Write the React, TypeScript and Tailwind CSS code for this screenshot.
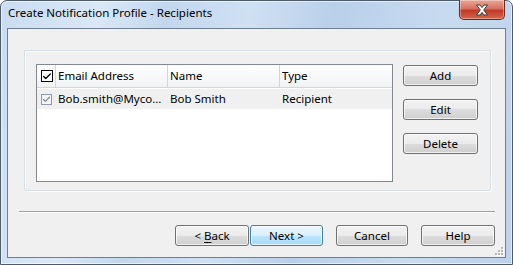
import { Check } from "lucide-react";

const font = { fontFamily: '"Noto Sans", "Open Sans", sans-serif' };

function WinButton({
  label,
  primary = false,
  className = "",
}: {
  label: React.ReactNode;
  primary?: boolean;
  className?: string;
}) {
  return (
    <div
      className={`flex h-[21px] shrink-0 items-center justify-center rounded-[3px] border text-[11.5px] leading-none text-black ${
        primary
          ? "border-[#3c7fb1] bg-[linear-gradient(#eaf6fd_0%,#d9f0fc_50%,#bee6fd_50%,#a7d9f5_100%)]"
          : "border-[#707070] bg-[linear-gradient(#f2f2f2_0%,#ebebeb_50%,#dddddd_50%,#cfcfcf_100%)]"
      } shadow-[inset_0_0_0_1px_rgba(255,255,255,0.7)] ${className}`}
    >
      {label}
    </div>
  );
}

function CloseButton() {
  return (
    <div className="flex h-[20px] w-[46px] items-center justify-center rounded-b-[5px] border border-t-0 border-[#6b2a20] bg-[linear-gradient(#eaa796_0%,#d8705f_45%,#c23a26_55%,#d4664a_100%)] shadow-[inset_0_0_0_1px_rgba(255,255,255,0.35)]">
      <svg width="14" height="12" viewBox="0 0 14 12">
        <path
          d="M1.5 1 L5 1 L7 3.6 L9 1 L12.5 1 L8.7 6 L12.5 11 L9 11 L7 8.4 L5 11 L1.5 11 L5.3 6 Z"
          fill="#ffffff"
          stroke="#3d3d3d"
          strokeWidth="1"
          strokeLinejoin="round"
        />
      </svg>
    </div>
  );
}

function HeaderCell({ children, className = "" }: { children?: React.ReactNode; className?: string }) {
  return (
    <div className={`flex h-full items-center border-r border-[#d5d5d5] pl-[2px] ${className}`}>
      {children}
    </div>
  );
}

export default function App() {
  return (
    <div style={font} className="h-[265px] w-[513px] overflow-hidden bg-white">
      <div className="flex h-[265px] w-[513px] flex-col rounded-t-[7px] border border-[#4e5b6b] bg-[linear-gradient(100deg,#c9dcf1_0%,#dae8f7_18%,#c2d7ee_30%,#cfe0f3_45%,#b9d0ea_60%,#c7dbf0_80%,#bcd2eb_100%)] px-[6px] shadow-[inset_0_0_0_1px_rgba(255,255,255,0.6)]">
        {/* title bar */}
        <div className="relative flex h-[27px] shrink-0 items-start">
          <span className="pl-[1px] pt-[3px] text-[11.5px] leading-[17px] text-black">
            Create Notification Profile - Recipients
          </span>
          <div className="absolute right-[1px] top-[-1px]">
            <CloseButton />
          </div>
        </div>

        {/* client area */}
        <div className="relative flex h-[230px] shrink-0 flex-col border border-[#6f7f91] bg-[#f0f0f0]">
          <div className="ml-[16px] mt-[21px] flex h-[141px] w-[467px] rounded-[2px] border border-[#d5dfe5] pl-[11px] pt-[13px] shadow-[inset_1px_1px_0_#ffffff,1px_1px_0_#ffffff]">
            {/* list view */}
            <div className="flex h-[118px] w-[357px] flex-col border border-[#828790] bg-white text-[11.5px] text-black">
              <div className="flex h-[23px] shrink-0 border-b border-[#d5d5d5] bg-[linear-gradient(#ffffff_0%,#f7f8fa_60%,#f1f2f4_100%)]">
                <HeaderCell className="w-[19px] pl-[4px]">
                  <div className="flex h-[12px] w-[12px] items-center justify-center border border-black bg-white">
                    <Check size={11} strokeWidth={3.2} color="#000" />
                  </div>
                </HeaderCell>
                <HeaderCell className="w-[112px]">Email Address</HeaderCell>
                <HeaderCell className="w-[112px]">Name</HeaderCell>
                <HeaderCell className="w-[112px] border-r-0">Type</HeaderCell>
              </div>
              <div className="mt-[1px] flex h-[20px] items-center bg-[#f0f0f0]">
                <div className="flex w-[19px] pl-[4px]">
                  <div className="flex h-[11px] w-[11px] items-center justify-center border border-[#8f9aa8] bg-[#f4f6f8]">
                    <Check size={9} strokeWidth={3} color="#7d8794" />
                  </div>
                </div>
                <span className="w-[112px] pl-[2px]">Bob.smith@Myco...</span>
                <span className="w-[112px] pl-[2px]">Bob Smith</span>
                <span className="w-[112px] pl-[2px]">Recipient</span>
              </div>
            </div>

            {/* side buttons */}
            <div className="ml-[10px] flex flex-col gap-[13px] pt-[1px]">
              <WinButton label="Add" className="w-[75px]" />
              <WinButton label="Edit" className="w-[75px]" />
              <WinButton label="Delete" className="w-[75px]" />
            </div>
          </div>

          <div className="ml-[11px] mt-[20px] h-[1px] w-[476px] bg-[#a0a0a0] shadow-[0_1px_0_#ffffff]" />

          <div className="mt-[13px] flex pl-[167px]">
            <WinButton
              label={
                <span>
                  &lt; <span className="underline underline-offset-2">B</span>ack
                </span>
              }
              className="w-[74px]"
            />
            <WinButton label="Next >" primary className="ml-[1px] w-[73px]" />
            <WinButton label="Cancel" className="ml-[13px] w-[72px]" />
            <WinButton label="Help" className="ml-[13px] w-[74px]" />
          </div>

          {/* size grip */}
          <svg className="absolute bottom-[1px] right-[1px]" width="10" height="10" viewBox="0 0 10 10">
            {[
              [7, 1],
              [4, 4],
              [7, 4],
              [1, 7],
              [4, 7],
              [7, 7],
            ].map(([x, y]) => (
              <g key={`${x}-${y}`}>
                <rect x={x + 1} y={y + 1} width="2" height="2" fill="#ffffff" />
                <rect x={x} y={y} width="2" height="2" fill="#b8b8b8" />
              </g>
            ))}
          </svg>
        </div>
      </div>
    </div>
  );
}
